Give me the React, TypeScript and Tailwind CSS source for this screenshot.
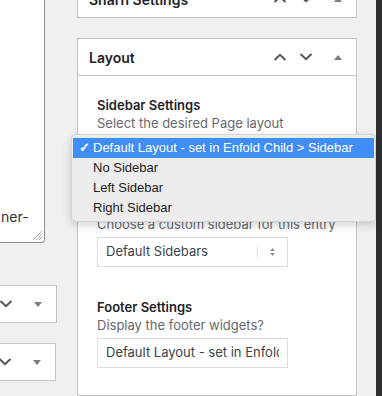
import React from "react";

const font = { fontFamily: "Inter, 'Liberation Sans', sans-serif" };

function Chevron({ up = false }: { up?: boolean }) {
  return (
    <svg width="14" height="8" viewBox="0 0 14 8" className="text-[#50575e]">
      <path
        d={up ? "M1.5 7L7 1.8L12.5 7" : "M1.5 1L7 6.2L12.5 1"}
        fill="none"
        stroke="currentColor"
        strokeWidth={2}
      />
    </svg>
  );
}

function Toggle() {
  return (
    <svg width="8" height="5" viewBox="0 0 8 5" className="text-[#787c82]">
      <path d="M0 5L4 0L8 5Z" fill="currentColor" />
    </svg>
  );
}

function BoxActions({ open = true }: { open?: boolean }) {
  return (
    <div className="flex items-center pr-[14px]">
      <Chevron up />
      <div className="ml-[12px]">
        <Chevron />
      </div>
      <div className={`ml-[21px] ${open ? "" : "rotate-180"}`}>
        <Toggle />
      </div>
    </div>
  );
}

function Field({
  title,
  desc,
  value,
  arrows = false,
}: {
  title: string;
  desc: string;
  value: string;
  arrows?: boolean;
}) {
  return (
    <div>
      <div className="text-[13px] leading-[18px] font-semibold text-[#1d2327]">{title}</div>
      <div className="text-[13px] leading-[18px] text-[#646970]">{desc}</div>
      <div className="mt-[4px] w-[191px] h-[30px] border border-[#dcdcde] bg-white flex items-center text-[13px] text-[#3c434a]">
        <div className="flex-1 overflow-hidden whitespace-nowrap pl-[8px] mr-[8px]">{value}</div>
        {arrows && (
          <div className="flex items-center h-full">
            <div className="w-px h-[11px] bg-[#dcdcde]" />
            <div className="w-[29px] flex flex-col items-center gap-[2px] text-[#8c8f94]">
              <svg width="5" height="3" viewBox="0 0 5 3">
                <path d="M0 3L2.5 0L5 3Z" fill="currentColor" />
              </svg>
              <svg width="5" height="3" viewBox="0 0 5 3">
                <path d="M0 0L2.5 3L5 0Z" fill="currentColor" />
              </svg>
            </div>
          </div>
        )}
      </div>
    </div>
  );
}

const options = [
  "Default Layout - set in Enfold Child > Sidebar",
  "No Sidebar",
  "Left Sidebar",
  "Right Sidebar",
];

export default function App() {
  return (
    <div className="relative w-[382px] h-[396px] overflow-hidden bg-[#f0f0f1] flex" style={font}>
      {/* left column */}
      <div className="w-[77px] shrink-0 flex flex-col">
        <div className="w-[45px] h-[243px] bg-white border-r border-b border-[#8c8f94] rounded-br-[4px] flex flex-col justify-end relative">
          <div className="text-[14px] leading-[18px] text-[#2c3338] pl-[1px] mb-[16px]">ner-</div>
          <svg width="12" height="12" viewBox="0 0 12 12" className="absolute right-[1px] bottom-[1px] text-[#a7aaad]">
            <path d="M11 2L2 11M11 5L5 11M11 8L8 11" stroke="currentColor" strokeWidth={1} />
          </svg>
        </div>
        <div className="mt-[42px] w-[57px] h-[38px] bg-white border-y border-r border-[#c3c4c7] flex items-center justify-end overflow-hidden">
          <BoxActions open={false} />
        </div>
        <div className="mt-[20px] w-[56px] h-[38px] bg-white border-y border-r border-[#c3c4c7] flex items-center justify-end overflow-hidden">
          <BoxActions open={false} />
        </div>
      </div>

      {/* right column */}
      <div className="w-[280px] shrink-0 flex flex-col">
        <div className="mt-[-20px] h-[38px] bg-white border border-[#c3c4c7] flex items-center justify-between pl-[11px]">
          <div className="text-[14px] font-semibold text-[#1d2327]">Sharh Settings</div>
          <BoxActions />
        </div>
        <div className="mt-[20px] flex-1 bg-white border border-[#c3c4c7]">
          <div className="h-[37px] border-b border-[#c3c4c7] flex items-center justify-between pl-[11px]">
            <div className="text-[14px] font-semibold text-[#1d2327]">Layout</div>
            <BoxActions />
          </div>
          <div className="pl-[19px] pt-[20px] flex flex-col gap-[31px]">
            <Field title="Sidebar Settings" desc="Select the desired Page layout" value="Default Layout - set in Enfold Child > Sidebar" />
            <Field title="Sidebar Setting" desc="Choose a custom sidebar for this entry" value="Default Sidebars" arrows />
            <Field title="Footer Settings" desc="Display the footer widgets?" value="Default Layout - set in Enfold Child > Footer" />
          </div>
        </div>
      </div>

      <div className="w-[19px] shrink-0" />
      <div className="flex-1 bg-[#2f2f2f]" />

      {/* native select popup */}
      <div className="absolute left-[71px] top-[134px] w-[305px] h-[88px] rounded-[5px] bg-[#ececec] border border-[#d4d4d4] shadow-[0_3px_10px_rgba(0,0,0,0.18)] py-[3px] px-[1px]">
        {options.map((o, i) => (
          <div
            key={o}
            className={`h-[20px] flex items-center text-[13px] whitespace-nowrap ${
              i === 0 ? "bg-[#3f8ef6] text-white" : "text-[#222]"
            }`}
            style={{ fontFamily: "'Liberation Sans', Arial, sans-serif" }}
          >
            <span className="w-[20px] pl-[6px] text-[13px] font-bold">{i === 0 ? "✓" : ""}</span>
            <span>{o}</span>
          </div>
        ))}
      </div>
    </div>
  );
}
